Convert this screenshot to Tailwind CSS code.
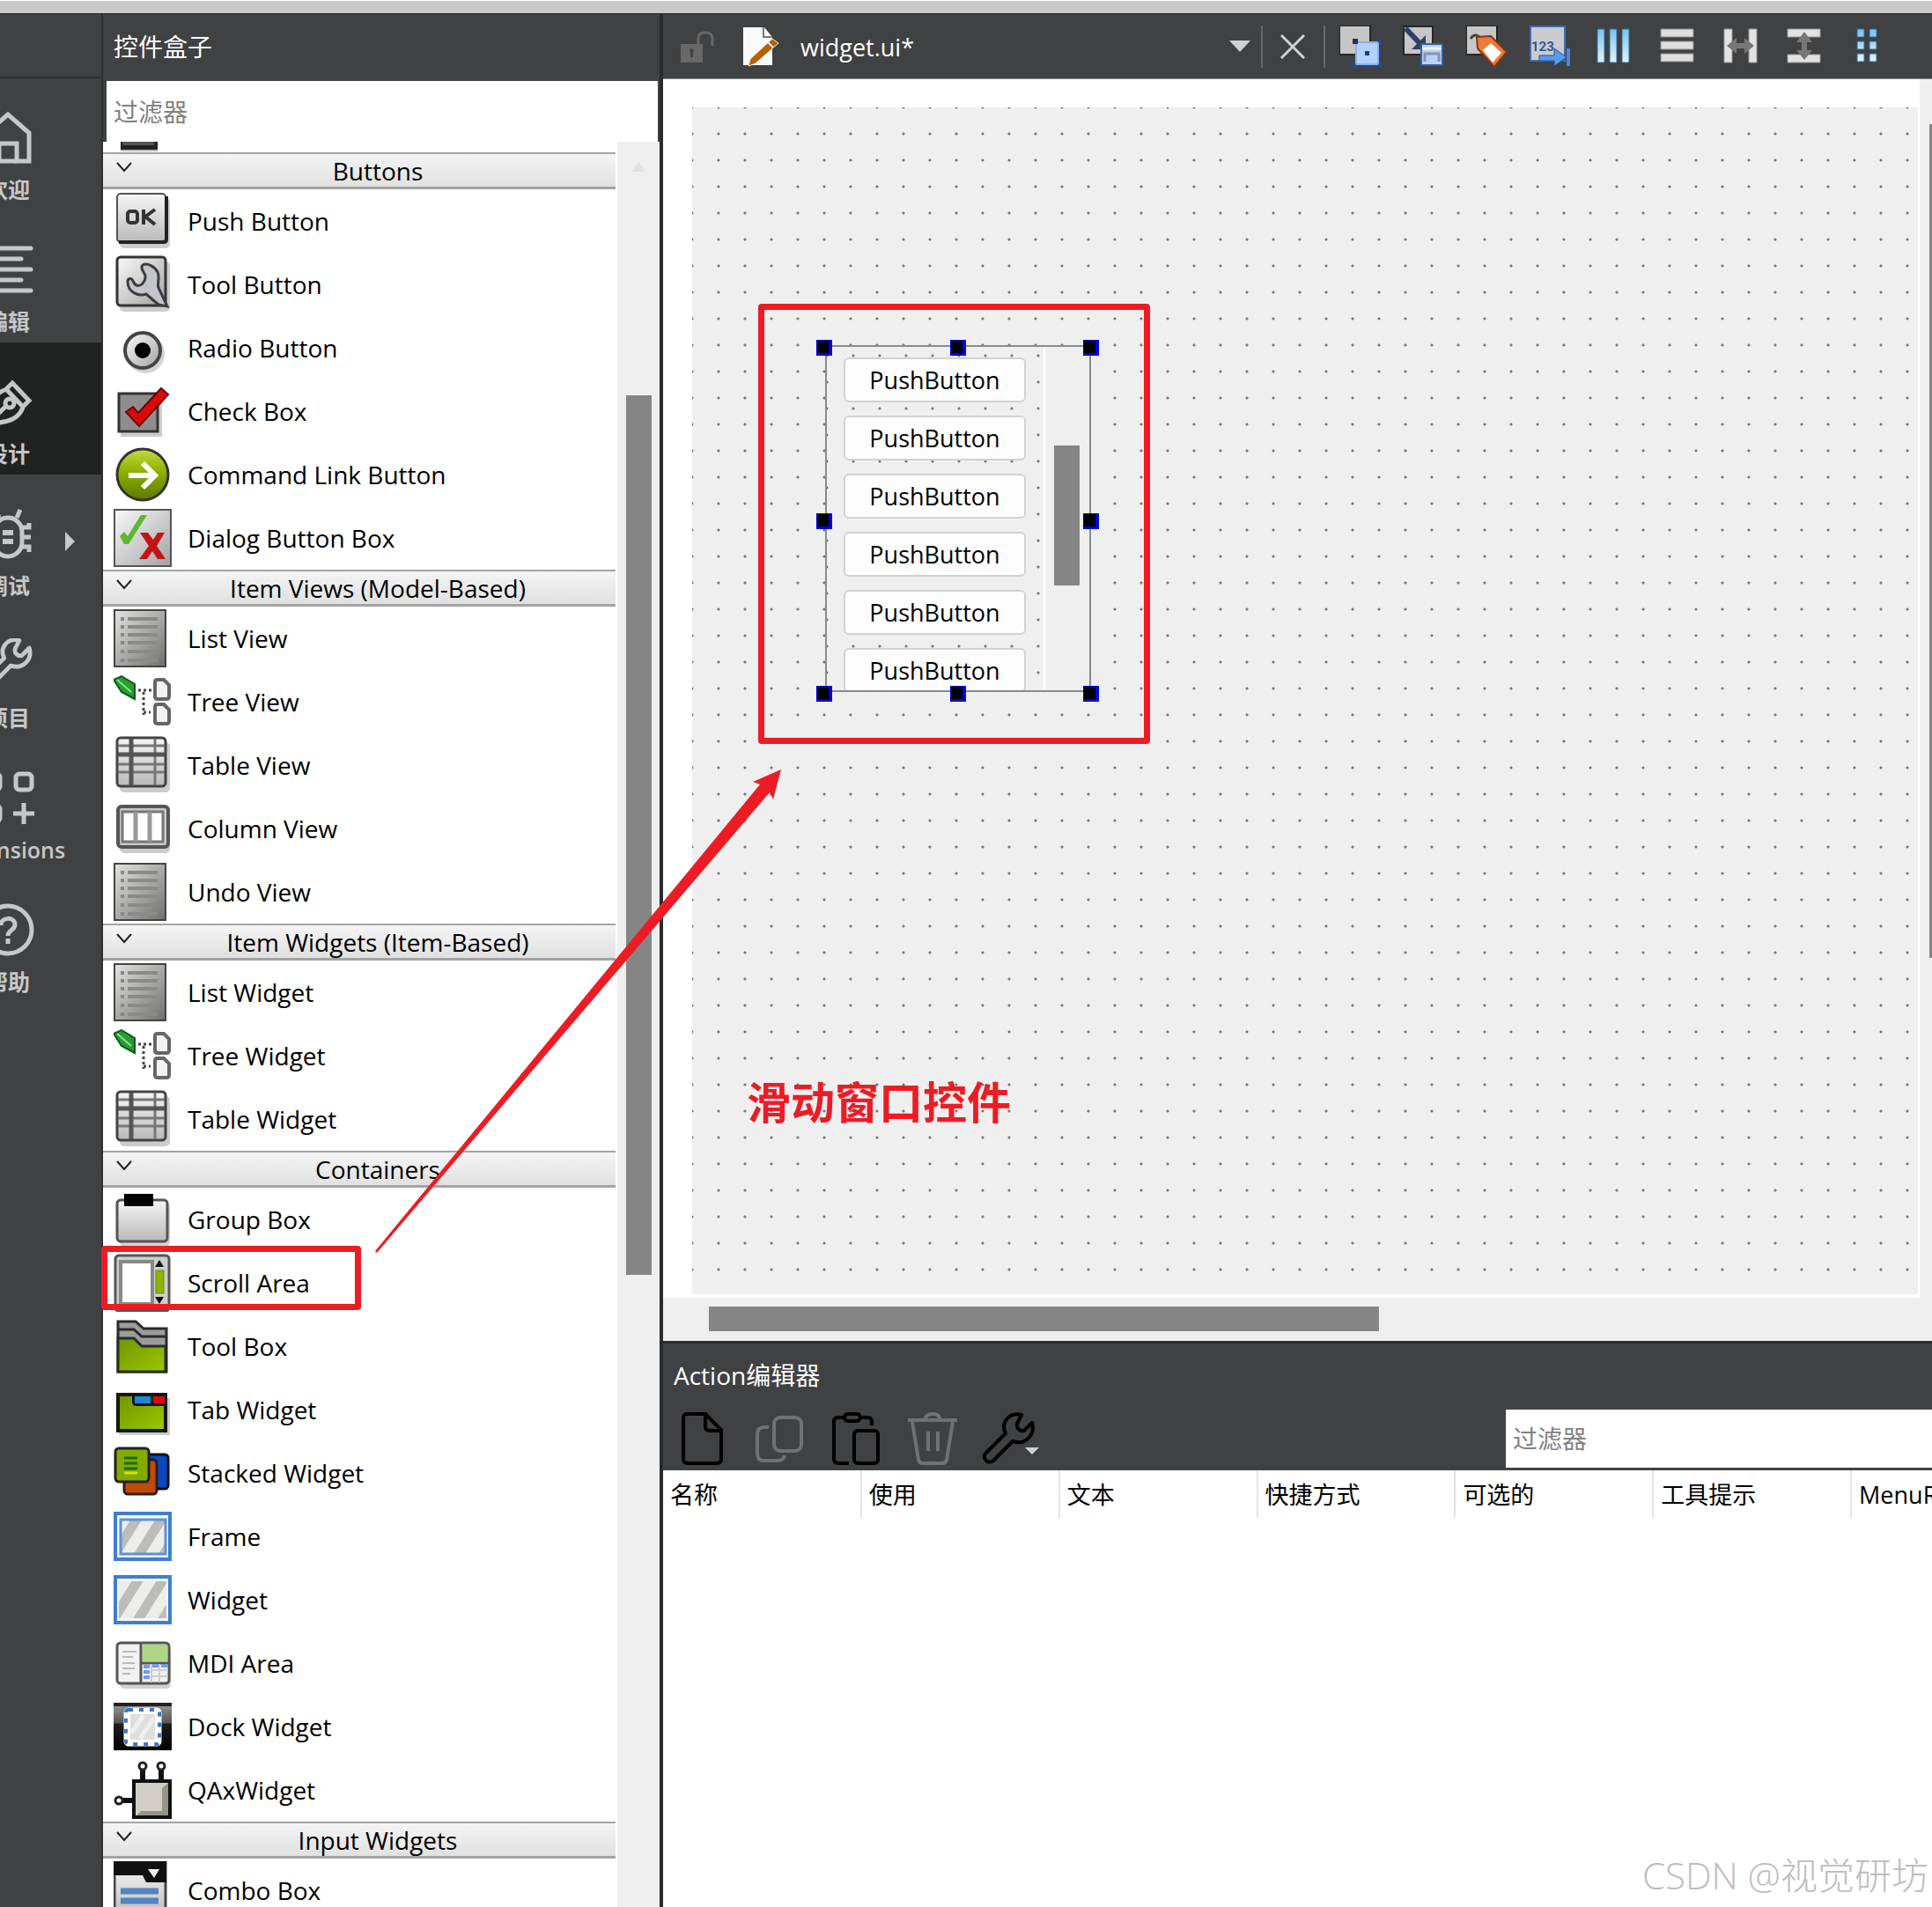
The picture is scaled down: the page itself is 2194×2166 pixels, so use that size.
<!DOCTYPE html>
<html lang="zh-CN">
<head>
<meta charset="utf-8">
<title>widget.ui</title>
<script src="https://cdn.jsdelivr.net/npm/@tailwindcss/browser@4"></script>
</head>
<body class="font-['Open_Sans','Noto_Sans_CJK_SC',sans-serif] text-[28px] leading-9 text-black">

<!-- Shared icon definitions -->
<svg class="absolute h-0 w-0" aria-hidden="true">
  <defs>
    <linearGradient id="silver" x1="0" y1="0" x2="0" y2="1"><stop offset="0" stop-color="#f6f6f6"/><stop offset="1" stop-color="#b9b9b9"/></linearGradient>
    <linearGradient id="steel" x1="0" y1="0" x2="1" y2="1"><stop offset="0" stop-color="#e4e4e2"/><stop offset="1" stop-color="#6f706c"/></linearGradient>
    <linearGradient id="panel" x1="0" y1="0" x2="1" y2="1"><stop offset="0" stop-color="#fafafa"/><stop offset="1" stop-color="#a2a2a2"/></linearGradient>
    <linearGradient id="lime" x1="0" y1="0" x2="1" y2="1"><stop offset="0" stop-color="#6f9400"/><stop offset="1" stop-color="#9cc800"/></linearGradient>
    <linearGradient id="ball" x1="0" y1="0" x2="0" y2="1"><stop offset="0" stop-color="#c0dc40"/><stop offset=".45" stop-color="#8db000"/><stop offset="1" stop-color="#5d7800"/></linearGradient>
    <linearGradient id="dusk" x1="0" y1="0" x2="0" y2="1"><stop offset="0" stop-color="#9c9c9c"/><stop offset=".42" stop-color="#555"/><stop offset=".45" stop-color="#1e1e1e"/><stop offset="1" stop-color="#000"/></linearGradient>
    <linearGradient id="sky" x1="0" y1="0" x2="0" y2="1"><stop offset="0" stop-color="#79c3ee"/><stop offset="1" stop-color="#e4f4fc"/></linearGradient>
    <pattern id="stripes" width="28" height="60" patternUnits="userSpaceOnUse" patternTransform="skewX(-32)"><rect width="28" height="60" fill="#ededeb"/><rect width="13" height="60" fill="#bcbcba"/></pattern>

    <symbol id="i-push" viewBox="0 0 66 66"><rect x="7" y="7" width="57" height="57" rx="5" fill="#ccc"/><rect x="4" y="2" width="55" height="55" rx="4" fill="url(#silver)" stroke="#555" stroke-width="2"/><path d="M6 57h51q3 0 3-3V5" fill="none" stroke="#222" stroke-width="4"/><g fill="none" stroke="#333" stroke-width="4"><rect x="16" y="22" width="11" height="13" rx="3"/><path d="M34 20v17M47 20l-11 8 11 9"/></g></symbol>
    <symbol id="i-tool" viewBox="0 0 66 66"><rect x="7" y="7" width="57" height="57" rx="5" fill="#ccc"/><rect x="4" y="2" width="55" height="55" rx="4" fill="url(#panel)" stroke="#333" stroke-width="3"/><path d="M33 11c5-3 14 2 17 8 3 7-1 13 1 18l10 21-10-2-14-12c-9 3-21-2-21-14 0-4 4-5 6-1 2 6 7 7 11 3 4-5 4-9 1-13-2-3-3-6-1-8z" fill="#c4c4cc" stroke="#3c3c42" stroke-width="3"/></symbol>
    <symbol id="i-radio" viewBox="0 0 66 66"><circle cx="36" cy="40" r="22" fill="#d2d2d2"/><circle cx="33" cy="36" r="20" fill="url(#panel)" stroke="#444" stroke-width="4"/><circle cx="33" cy="36" r="9" fill="#000"/></symbol>
    <symbol id="i-check" viewBox="0 0 66 66"><rect x="8" y="16" width="47" height="46" fill="#ccc"/><rect x="6" y="13" width="44" height="43" fill="#8d8d8d" stroke="#333" stroke-width="3"/><path d="M14 34l8-6 6 7L54 7l8 7-33 36z" fill="#d90a0a" stroke="#6d0000" stroke-width="2"/></symbol>
    <symbol id="i-command" viewBox="0 0 66 66"><circle cx="33" cy="33" r="29" fill="url(#ball)" stroke="#333" stroke-width="3"/><path d="M17 34h27M33 20l14 14-14 14" fill="none" stroke="#fff" stroke-width="6"/></symbol>
    <symbol id="i-dialog" viewBox="0 0 66 66"><rect x="1" y="1" width="64" height="64" fill="url(#panel)" stroke="#555" stroke-width="2"/><path d="M7 31l5-5 4 5L31 7h7L17 40h-5z" fill="#5cb82c"/><path d="M30 27h9l6 8 5-8h8L49 42l10 15h-9l-6-9-6 9h-9l11-15z" fill="#c31414"/></symbol>
    <symbol id="i-list" viewBox="0 0 66 66"><rect x="1" y="1" width="58" height="64" fill="url(#steel)" stroke="#444" stroke-width="2"/><path d="M16 11h34M16 20h34M16 29h34M16 38h34M16 48h34M16 58h34" stroke="#8a8a88" stroke-width="4"/><path d="M8 11h4M8 20h4M8 29h4M8 38h4M8 48h4M8 58h4" stroke="#888" stroke-width="4"/></symbol>
    <symbol id="i-tree" viewBox="0 0 66 66"><path d="M0 8l9-4 15 9v17L9 22z" fill="#2c9a35" stroke="#0d5a18" stroke-width="2"/><path d="M4 8l16 14" stroke="#8cdf8c" stroke-width="2"/><path d="M28 20h16M34 22v26M34 45h8" fill="none" stroke="#444" stroke-width="3" stroke-dasharray="3 3"/><g fill="#f3f3f3" stroke="#666" stroke-width="4"><path d="M50 8h7l6 6v13q0 3-3 3H50q-3 0-3-3V11q0-3 3-3zM50 36h7l6 6v13q0 3-3 3H50q-3 0-3-3V39q0-3 3-3z"/></g></symbol>
    <symbol id="i-table" viewBox="0 0 66 66"><rect x="7" y="7" width="57" height="57" rx="5" fill="#ccc"/><rect x="4" y="2" width="55" height="55" rx="4" fill="url(#silver)" stroke="#444" stroke-width="3"/><path d="M5 11h53M5 32h53M5 41h53M47 3v53" stroke="#777" stroke-width="3"/><path d="M5 21h53M20 3v53" stroke="#555" stroke-width="5"/></symbol>
    <symbol id="i-column" viewBox="0 0 66 66"><rect x="7" y="11" width="57" height="50" rx="5" fill="#ccc"/><rect x="5" y="8" width="57" height="46" rx="4" fill="#c9c9c9" stroke="#555" stroke-width="4"/><rect x="10" y="14" width="46" height="34" fill="#fff" stroke="#777" stroke-width="3"/><path d="M25 14v34M41 14v34" stroke="#999" stroke-width="5"/></symbol>
    <symbol id="i-group" viewBox="0 0 66 66"><rect x="7" y="14" width="57" height="50" rx="5" fill="#d4d4d4"/><rect x="4" y="11" width="57" height="47" rx="4" fill="url(#silver)" stroke="#555" stroke-width="3"/><rect x="12" y="4" width="33" height="14" fill="#000"/></symbol>
    <symbol id="i-scroll" viewBox="0 0 66 66"><rect x="2" y="2" width="61" height="63" rx="4" fill="#cfcfcf" stroke="#555" stroke-width="3"/><rect x="8" y="9" width="36" height="48" fill="#fff" stroke="#888" stroke-width="4"/><path d="M47 15l5-8 5 8zM47 49l5 8 5-8z" fill="#111"/><rect x="48" y="19" width="9" height="26" fill="#8fb400" stroke="#6b8800"/></symbol>
    <symbol id="i-toolbox" viewBox="0 0 66 66"><path d="M5 5h20l9 8h26v49H5z" fill="#9c9c9c" stroke="#2a2a2a" stroke-width="3"/><path d="M5 14h18l9 8h27" fill="none" stroke="#2a2a2a" stroke-width="3"/><path d="M5 24h18l9 9h27v29H5z" fill="url(#lime)" stroke="#2a2a2a" stroke-width="3"/></symbol>
    <symbol id="i-tab" viewBox="0 0 66 66"><rect x="6" y="20" width="58" height="42" fill="#ccc"/><rect x="5" y="16" width="54" height="41" fill="url(#lime)" stroke="#161616" stroke-width="4"/><path d="M21 15h39v14H26q-5 0-5-5z" fill="#161616"/><rect x="24" y="18" width="18" height="8" fill="#1e86d2"/><rect x="45" y="18" width="13" height="8" fill="#e00808"/></symbol>
    <symbol id="i-stacked" viewBox="0 0 66 66"><rect x="36" y="12" width="26" height="39" rx="4" fill="#0a48c4" stroke="#111" stroke-width="3"/><rect x="12" y="18" width="37" height="39" rx="4" fill="#c24a08" stroke="#222" stroke-width="3"/><rect x="2" y="5" width="38" height="38" rx="4" fill="#82aa00" stroke="#222" stroke-width="3"/><path d="M12 16h15M12 22h15M12 28h15" stroke="#1d6b00" stroke-width="3"/><path d="M12 33h15" stroke="#cde800" stroke-width="3"/></symbol>
    <symbol id="i-frame" viewBox="0 0 66 66"><rect x="2" y="7" width="62" height="52" fill="#f3f7fc" stroke="#3f7fcb" stroke-width="4"/><rect x="8" y="14" width="51" height="39" fill="url(#stripes)" stroke="#5d93d3" stroke-width="3"/></symbol>
    <symbol id="i-widget" viewBox="0 0 66 66"><rect x="2" y="7" width="62" height="52" fill="#f3f7fc" stroke="#3f7fcb" stroke-width="4"/><rect x="6" y="12" width="54" height="42" fill="url(#stripes)"/></symbol>
    <symbol id="i-mdi" viewBox="0 0 66 66"><rect x="7" y="14" width="58" height="48" rx="5" fill="#d0d0d0"/><rect x="4" y="10" width="59" height="46" rx="4" fill="#f2f2f2" stroke="#555" stroke-width="3"/><rect x="33" y="12" width="28" height="19" fill="#aed581"/><path d="M31 11v45M31 33h31" stroke="#555" stroke-width="3"/><path d="M10 20h16M10 26h12M10 33h14M10 39h14M10 45h9" stroke="#bbb" stroke-width="2"/><path d="M34 37h7M34 43h7M34 49h7M44 36h7M54 36h7" stroke="#6c9cf0" stroke-width="4"/><path d="M43 34v21M52 34v21M42 41h20M42 48h20" stroke="#ccc" stroke-width="2"/></symbol>
    <symbol id="i-dock" viewBox="0 0 66 66"><rect y="6" width="66" height="54" fill="url(#dusk)"/><path d="M0 8h66" stroke="#222" stroke-width="4"/><rect x="14" y="14" width="38" height="39" rx="3" fill="#fff" stroke="#fff" stroke-width="5"/><rect x="14" y="14" width="38" height="39" rx="3" fill="none" stroke="#3b78c6" stroke-width="4" stroke-dasharray="5 7"/><rect x="19" y="19" width="28" height="29" fill="#dededc"/><path d="M20 40l14-20M30 47l16-24" stroke="#efefed" stroke-width="5"/></symbol>
    <symbol id="i-qax" viewBox="0 0 66 66"><path d="M33 9v14M54 9v14M9 45h14" stroke="#111" stroke-width="6"/><g fill="#fff" stroke="#222" stroke-width="3"><circle cx="33" cy="6" r="4"/><circle cx="54" cy="6" r="4"/><circle cx="6" cy="45" r="4"/></g><rect x="23" y="23" width="41" height="41" fill="#d3cec8" stroke="#111" stroke-width="4"/><path d="M26 62l5-5h24V31l7-6v37z" fill="#96928c"/></symbol>
    <symbol id="i-combo" viewBox="0 0 66 66"><rect x="1" y="1" width="58" height="65" fill="url(#silver)" stroke="#444" stroke-width="3"/><path d="M0 0h60v24H37l-4-8H0z" fill="#111"/><path d="M39 9h13l-6 10z" fill="#eee"/><path d="M8 34h43M8 45h43M8 57h43" stroke="#5284bf" stroke-width="7"/></symbol>
    <symbol id="i-chevron" viewBox="0 0 20 12"><path d="M2 1l8 9 8-9" fill="none" stroke="#222" stroke-width="2"/></symbol>
    <symbol id="i-wrench" viewBox="0 0 60 60"><path d="M44 3C30-1 20 12 26 24L3 47c-4 5 3 13 9 8l22-22c14 5 26-7 22-21l-9 9c-5 1-9-3-8-8z" fill="none" stroke-linejoin="round"/></symbol>
  </defs>
</svg>

<div class="relative flex h-screen flex-col overflow-hidden bg-[#404142]">
  <div class="h-[15px] shrink-0 border-t border-white bg-[#c9c9c9]"></div>
  <div class="flex min-h-0 flex-1 border-t border-[#2a2b2c]">

    <!-- Mode bar -->
    <nav class="flex w-[117px] shrink-0 flex-col overflow-hidden border-r-2 border-[#2e2f30] font-semibold text-[#c6c7c8]">
      <div class="h-[73px] shrink-0 border-b-2 border-[#2e2f30]"></div>
      <div class="-ml-[97px] flex w-[212px] flex-col text-[25px] leading-9 [&>a]:flex [&>a]:h-[150px] [&>a]:flex-col [&>a]:items-center [&>a]:gap-2 [&>a]:pt-9 [&_svg]:h-16 [&_svg]:w-[60px] [&_svg]:fill-none [&_svg]:stroke-current [&_svg]:stroke-[5]">
        <a href="#welcome"><svg viewBox="0 0 60 64"><path d="M30 5L6 26v32h14V38h20v20h14V26z"/><path d="M22 58h18"/></svg>欢迎</a>
        <a href="#edit"><svg viewBox="0 0 60 64"><path d="M4 7h52M16 19h29M4 31h52M16 43h29M4 55h52" stroke-linecap="round"/></svg>编辑</a>
        <a href="#design" class="bg-[#212222]"><svg viewBox="0 0 60 64"><path d="M35 10l19 20-7 7-19-20zM47 38c-5 12-14 17-39 18 1-23 6-33 18-38M10 54l17-17"/><circle cx="32" cy="33" r="5"/></svg>设计</a>
        <a href="#debug" class="relative"><svg viewBox="0 1 60 64"><rect x="14" y="14" width="32" height="44" rx="16"/><path d="M20 14l-4-9M40 14l4-9M46 25h8v-5M46 36h10M46 47h8v6M14 25H6v-5M14 36H4M14 47H6v6"/><path d="M24 31h12M24 41h12" stroke-width="6"/></svg>调试<svg class="absolute right-[30px] top-[65px] !h-[22px] !w-[11px]" viewBox="0 0 11 22"><path d="M0 0l11 11L0 22z" fill="#c6c7c8" stroke="none"/></svg></a>
        <a href="#projects"><svg viewBox="-1 2 63 64"><use href="#i-wrench" width="60" height="60"/></svg>项目</a>
        <a href="#extensions"><svg viewBox="0 5 60 64"><rect x="3" y="9" width="18" height="18" rx="4"/><rect x="39" y="9" width="18" height="18" rx="4"/><rect x="3" y="45" width="18" height="18" rx="4"/><path d="M48 42v24M36 54h24"/></svg>Extensions</a>
        <a href="#help"><svg viewBox="0 1 60 64"><circle cx="30" cy="32" r="27"/><path d="M22 27c0-10 16-10 16-1 0 7-8 6-8 13M30 42v6"/></svg>帮助</a>
      </div>
    </nav>

    <!-- Widget box -->
    <aside class="flex w-[636px] shrink-0 flex-col overflow-hidden border-r-4 border-[#2a2b2c]">
      <h2 class="flex h-[76px] shrink-0 items-center px-3 pb-[2px] text-white">控件盒子</h2>
      <div class="shrink-0 pl-1 pr-[2px]"><input type="text" aria-label="过滤器" placeholder="过滤器" class="block h-[69px] w-full bg-white px-2 placeholder:text-[#808080]"></div>
      <div class="flex min-h-0 flex-1 bg-white">
        <div class="mr-[2px] min-w-0 flex-1 overflow-hidden [&>h3]:flex [&>h3]:h-[42px] [&>h3]:items-center [&>h3]:border-b-[3px] [&>h3]:border-t-2 [&>h3]:border-[#a3a3a3] [&>h3]:bg-linear-to-b [&>h3]:from-[#f4f4f4] [&>h3]:to-[#e1e1e1] [&>h3]:pl-[14px] [&_h3>svg]:-mt-2 [&_h3>svg]:h-3 [&_h3>svg]:w-5 [&_h3>span]:ml-2 [&_h3>span]:flex-1 [&_h3>span]:text-center [&_li]:flex [&_li]:h-[72px] [&_li]:items-center [&_li]:gap-[18px] [&_li]:pl-3 [&_li>svg]:size-[66px]">
          <svg class="h-3 w-full" aria-hidden="true"><rect x="20" width="42" height="9" fill="#222"/><rect x="22" width="36" height="4" fill="#555"/><rect x="20" y="9" width="42" height="2" fill="#bbb"/></svg>
          <h3><svg><use href="#i-chevron"/></svg><span>Buttons</span></h3>
          <ul>
            <li><svg><use href="#i-push"/></svg>Push Button</li>
            <li><svg><use href="#i-tool"/></svg>Tool Button</li>
            <li><svg><use href="#i-radio"/></svg>Radio Button</li>
            <li><svg><use href="#i-check"/></svg>Check Box</li>
            <li><svg><use href="#i-command"/></svg>Command Link Button</li>
            <li><svg><use href="#i-dialog"/></svg>Dialog Button Box</li>
          </ul>
          <h3><svg><use href="#i-chevron"/></svg><span>Item Views (Model-Based)</span></h3>
          <ul>
            <li><svg><use href="#i-list"/></svg>List View</li>
            <li><svg><use href="#i-tree"/></svg>Tree View</li>
            <li><svg><use href="#i-table"/></svg>Table View</li>
            <li><svg><use href="#i-column"/></svg>Column View</li>
            <li><svg><use href="#i-list"/></svg>Undo View</li>
          </ul>
          <h3><svg><use href="#i-chevron"/></svg><span>Item Widgets (Item-Based)</span></h3>
          <ul>
            <li><svg><use href="#i-list"/></svg>List Widget</li>
            <li><svg><use href="#i-tree"/></svg>Tree Widget</li>
            <li><svg><use href="#i-table"/></svg>Table Widget</li>
          </ul>
          <h3><svg><use href="#i-chevron"/></svg><span>Containers</span></h3>
          <ul>
            <li><svg><use href="#i-group"/></svg>Group Box</li>
            <li><svg><use href="#i-scroll"/></svg>Scroll Area</li>
            <li><svg><use href="#i-toolbox"/></svg>Tool Box</li>
            <li><svg><use href="#i-tab"/></svg>Tab Widget</li>
            <li><svg><use href="#i-stacked"/></svg>Stacked Widget</li>
            <li><svg><use href="#i-frame"/></svg>Frame</li>
            <li><svg><use href="#i-widget"/></svg>Widget</li>
            <li><svg><use href="#i-mdi"/></svg>MDI Area</li>
            <li><svg><use href="#i-dock"/></svg>Dock Widget</li>
            <li><svg><use href="#i-qax"/></svg>QAxWidget</li>
          </ul>
          <h3><svg><use href="#i-chevron"/></svg><span>Input Widgets</span></h3>
          <ul>
            <li><svg><use href="#i-combo"/></svg>Combo Box</li>
          </ul>
        </div>
        <!-- Scroll bar -->
        <div class="flex w-[48px] shrink-0 flex-col items-center bg-[#efefef]">
          <svg class="mt-[22px] h-3 w-4" viewBox="0 0 16 12"><path d="M8 0l8 12H0z" fill="#e2e2e2"/></svg>
          <div class="mt-[254px] h-[999px] w-[29px] bg-[#858585]"></div>
        </div>
      </div>
    </aside>

    <main class="flex min-w-0 flex-1 flex-col">
      <!-- Editor tool bar -->
      <header class="flex h-[74px] shrink-0 items-center border-b border-[#888] text-[27px] text-white">
        <button aria-label="锁定" class="ml-5"><svg class="h-[36px] w-[38px]" viewBox="0 0 38 36"><rect y="15" width="25" height="21" fill="#686868"/><path d="M20 15V9q0-7 8-7t8 7v8" fill="none" stroke="#686868" stroke-width="3"/><path d="M12 20a3 3 0 0 1 2 5v5h-3v-5a3 3 0 0 1 1-5z" fill="#404142"/></svg></button>
        <svg class="ml-8 h-[46px] w-[42px]" viewBox="0 0 42 46"><path d="M1 1h24l9 11v32H1z" fill="#fafafa"/><path d="M24 1v11h10" fill="none" stroke="#777" stroke-width="2"/><path d="M34 14l7 5-26 23-8 3 2-8z" fill="#b95f04" stroke="#eee" stroke-width="1"/><path d="M29 18l6 6" stroke="#eee" stroke-width="2"/></svg>
        <span class="ml-6 flex-1 truncate pt-[2px]">widget.ui*</span>
        <button aria-label="文件列表"><svg class="h-[15px] w-6" viewBox="0 0 24 15"><path d="M0 1h24L12 14z" fill="#d0d1d2"/></svg></button>
        <div class="ml-3 h-12 w-[2px] bg-[#66686a]"></div>
        <button aria-label="关闭" class="ml-5"><svg class="size-7" viewBox="0 0 28 28"><path d="M1 1l26 26M27 1L1 27" stroke="#d0d1d2" stroke-width="3"/></svg></button>
        <div class="ml-[21px] h-12 w-[2px] bg-[#66686a]"></div>
        <div class="ml-4 mr-[49px] flex gap-6 [&_svg]:size-12">
          <button aria-label="编辑控件"><svg viewBox="0 0 48 48"><path d="M0 0h35v33H0z" fill="#c6c6c6" stroke="#262626" stroke-width="2"/><rect x="19" y="19" width="25" height="25" rx="1" fill="#b5d0ff" stroke="#8eb0ea" stroke-width="2"/><rect x="29" y="29" width="5" height="5" fill="#1d3d78"/><path d="M15 15h6v6h-6z" fill="#1b3562"/><path d="M43 17h4v5M16 41v6h6M28 47h8M42 47h5v-6M47 28v8" stroke="#1f4a96" stroke-width="3" fill="none"/></svg></button>
          <button aria-label="编辑信号槽"><svg viewBox="0 0 48 48"><path d="M1 1h33v32H1z" fill="#c6c6c6" stroke="#262626" stroke-width="2"/><path d="M3 3l18 19" stroke="#2b4263" stroke-width="6"/><path d="M26 11v16H10z" fill="#2b4263"/><rect x="21" y="21" width="24" height="24" fill="#b9d2fb" stroke="#3460a0" stroke-width="2"/><path d="M25 41v-9h16v9" fill="none" stroke="#8594a8" stroke-width="3"/><path d="M22 26h22" stroke="#eef4ff" stroke-width="3"/></svg></button>
          <button aria-label="编辑伙伴"><svg viewBox="0 0 48 48"><path d="M0 0h35v33H0z" fill="#c6c6c6" stroke="#262626" stroke-width="2"/><path d="M5 15q5-8 12 0" fill="none" stroke="#444" stroke-width="3"/><path d="M12 13l16-1 18 18-14 17-19-21z" fill="#ed7a3a" stroke="#7c3a18" stroke-width="2"/><path d="M28 20l12 11-10 11-11-14z" fill="#fff"/></svg></button>
          <button aria-label="编辑 Tab 顺序"><svg viewBox="0 0 48 48"><path d="M1 1h39v39H1z" fill="#c9cbd0" stroke="#3f6eb5" stroke-width="2"/><text x="2" y="29" font-size="15" font-weight="600" fill="#2b5190" font-family="Roboto">123</text><path d="M11 34h17v-8l14 10-14 10v-6H11z" fill="#5a9bf0" stroke="#234f92"/><path d="M44 26v20" stroke="#4d86d6" stroke-width="4"/></svg></button>
          <button aria-label="水平布局"><svg viewBox="0 0 48 48" fill="url(#sky)" stroke="#2d6a9c"><path d="M5 4h8v38H5zM19 4h8v38h-8zM33 4h8v38h-8z"/></svg></button>
          <button aria-label="垂直布局"><svg viewBox="0 0 48 48" fill="#dedede" stroke="#8a8a8a"><path d="M5 4h37v9H5zM5 18h37v9H5zM5 32h37v9H5z"/></svg></button>
          <button aria-label="水平分裂器布局"><svg viewBox="0 0 48 48"><path d="M5 4h9v38H5zM33 4h9v38h-9z" fill="#e2e2e2" stroke="#999"/><path d="M8 23l11-9v6h9v-6l11 9-11 9v-6h-9v6z" fill="#777"/></svg></button>
          <button aria-label="垂直分裂器布局"><svg viewBox="0 0 48 48"><path d="M5 4h37v9H5zM5 33h37v9H5z" fill="#e2e2e2" stroke="#999"/><path d="M24 7l9 12h-6v9h6l-9 11-9-11h6v-9h-6z" fill="#777"/></svg></button>
          <button aria-label="栅格布局"><svg viewBox="0 0 48 48" fill="url(#sky)" stroke="#2d6a9c"><path d="M12 4h8v9h-8zM26 4h8v9h-8zM12 18h8v9h-8zM26 18h8v9h-8zM12 32h8v9h-8zM26 32h8v9h-8z"/></svg></button>
        </div>
      </header>

      <!-- Form canvas -->
      <div class="flex min-h-0 flex-1 bg-white">
        <div class="min-w-0 flex-1 pb-1 pl-[33px] pr-[2px] pt-8">
          <div class="relative h-full bg-[#efefef] bg-[radial-gradient(circle_at_2px_2px,#777_1px,transparent_2px)] bg-[length:30px_30px] bg-[position:-2px_-2px]">
            <!-- Selected scroll area -->
            <div class="absolute left-[151px] top-[270px] h-[394px] w-[302px] border-2 border-[#868b93] bg-[#efefef]">
              <div class="flex h-full">
                <div class="h-full min-w-0 flex-1 overflow-hidden border-r-2 border-white bg-[radial-gradient(circle_at_2px_2px,#777_1px,transparent_2px)] bg-[length:30px_30px] bg-[position:-2px_8px] pl-[19px] pr-5 pt-3">
                  <div class="flex flex-col gap-[15px] text-[27px] [&>button]:h-[51px] [&>button]:shrink-0 [&>button]:rounded-md [&>button]:border-2 [&>button]:border-[#d2d2d2] [&>button]:bg-[#fdfdfd] [&>button]:leading-9">
                    <button>PushButton</button><button>PushButton</button><button>PushButton</button><button>PushButton</button><button>PushButton</button><button>PushButton</button>
                  </div>
                </div>
                <div class="w-[50px] shrink-0 pl-[10px] pr-[11px] pt-[112px]"><div class="h-[159px] bg-[#858585]"></div></div>
              </div>
              <div class="absolute -bottom-[13px] -left-3 -right-[11px] -top-2 grid grid-cols-3 content-between [&>i]:size-[18px] [&>i]:border [&>i]:border-b-[3px] [&>i]:border-r-4 [&>i]:border-[#0000e6] [&>i]:bg-black">
                <i></i><i class="justify-self-center"></i><i class="justify-self-end"></i>
                <i></i><i class="col-start-3 justify-self-end"></i>
                <i></i><i class="justify-self-center"></i><i class="justify-self-end"></i>
              </div>
            </div>
            <div class="absolute left-[75px] top-[223px] h-[500px] w-[445px] rounded border-[7px] border-[#ed1c24]"></div>
            <p class="absolute left-[62px] top-[1100px] text-[50px] font-bold leading-[60px] text-[#ed1c24]">滑动窗口控件</p>
          </div>
        </div>
        <div class="flex w-[14px] shrink-0 justify-end bg-[#efefef] pt-[51px]"><div class="h-[947px] w-[3px] bg-[#858585]"></div></div>
      </div>
      <div class="h-[49px] shrink-0 bg-[#efefef] pl-[52px] pt-[10px]"><div class="h-7 w-[54.8%] bg-[#858585]"></div></div>

      <!-- Action editor -->
      <section class="flex h-[643px] shrink-0 flex-col border-t-[3px] border-[#2a2b2c]">
        <h2 class="flex h-[72px] shrink-0 items-center px-3 text-white">Action编辑器</h2>
        <div class="flex h-[72px] shrink-0 items-center justify-between">
          <div class="flex gap-[27px] pl-[15px] [&_svg]:size-[60px] [&_svg]:fill-none [&_svg]:stroke-[4]">
            <button aria-label="新建" class="text-black"><svg viewBox="0 0 60 60" stroke="currentColor"><path d="M12 2h21l18 18v33q0 5-5 5H13q-5 0-5-5V7q0-5 4-5zM33 2v14q0 5 5 5h13"/></svg></button>
            <button aria-label="复制" disabled class="text-[#707172]"><svg viewBox="0 0 60 60" stroke="currentColor"><rect x="24" y="6" width="31" height="38" rx="7"/><path d="M18 17h-5q-8 0-8 8v22q0 8 8 8h15q7 0 8-6"/></svg></button>
            <button aria-label="粘贴" class="text-black"><svg viewBox="0 0 60 60" stroke="currentColor"><path d="M16 6h-6q-5 0-5 5v42q0 5 5 5h12M37 6h6q5 0 5 5v4"/><rect x="17" y="2" width="18" height="8" rx="4"/><rect x="28" y="21" width="27" height="37" rx="4"/></svg></button>
            <button aria-label="删除" disabled class="text-[#707172]"><svg viewBox="0 0 60 60" stroke="currentColor"><path d="M2 9h56M7 11l7 43q1 4 5 4h22q4 0 5-4l7-43M22 8q0-6 8-6t8 6M25 22v22M36 22v22"/></svg></button>
            <button aria-label="配置" class="relative text-black"><svg viewBox="0 0 60 60" stroke="currentColor"><use href="#i-wrench"/></svg><span class="absolute -right-1 bottom-3 h-0 w-0 border-x-8 border-t-8 border-x-transparent border-t-[#d0d1d2]"></span></button>
          </div>
          <input type="text" aria-label="过滤动作" placeholder="过滤器" class="h-[66px] w-[484px] bg-white px-2 placeholder:text-[#808080]">
        </div>
        <div class="min-h-0 flex-1 overflow-hidden bg-white">
          <table class="w-[1575px] table-fixed border-collapse text-left text-[27px] [&_th]:h-[54px] [&_th]:border-r-2 [&_th]:border-[#e4e4e4] [&_th]:p-0 [&_th]:pl-2 [&_th]:pt-[2px] [&_th]:font-normal">
            <thead><tr><th>名称</th><th>使用</th><th>文本</th><th>快捷方式</th><th>可选的</th><th>工具提示</th><th>MenuRole</th></tr></thead>
          </table>
        </div>
      </section>
    </main>
  </div>

  <!-- Annotations -->
  <div class="absolute left-[115px] top-[1415px] h-[73px] w-[295px] rounded border-[7px] border-[#ed1c24]"></div>
  <svg class="pointer-events-none absolute left-[420px] top-[870px] h-[560px] w-[480px]" viewBox="420 870 480 560"><path d="M426 1421L863 891l-8-3 32-14-9 34-4-8L428 1423z" fill="#ed1c24"/></svg>
  <p class="absolute bottom-[10px] right-1 text-[42px] font-light leading-[52px] text-[#bdbdbd]">CSDN @视觉研坊</p>
</div>
</body>
</html>
